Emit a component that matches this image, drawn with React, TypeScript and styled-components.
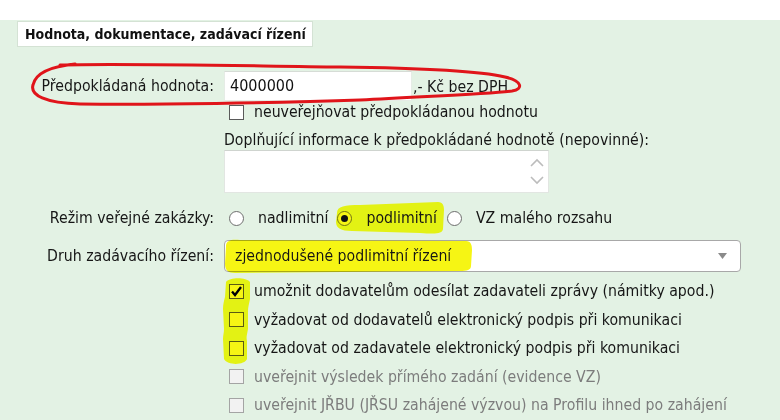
import React from "react";
import styled, { createGlobalStyle } from "styled-components";

const Global = createGlobalStyle`
  html, body { margin: 0; padding: 0; background: #ffffff; }
  body { font-family: "DejaVu Sans Condensed", "DejaVu Sans", sans-serif; color: #161616; }
`;

const Page = styled.div`
  width: 780px;
  height: 420px;
  overflow: hidden;
  padding-top: 20px;
  box-sizing: border-box;
`;

const Panel = styled.div`
  background: #e3f2e4;
  height: 400px;
  padding-top: 1px;
  box-sizing: border-box;
  font-size: 15.7px;
`;

const Heading = styled.div`
  margin-left: 17px;
  width: 296px;
  height: 26px;
  box-sizing: border-box;
  background: #ffffff;
  border: 1px solid #d4e2d4;
  padding-left: 7px;
  font-weight: bold;
  font-size: 14px;
  line-height: 24px;
  color: #111;
  white-space: nowrap;
`;

const Row = styled.div<{ $top: number; $h: number }>`
  position: relative;
  display: grid;
  grid-template-columns: 214px 1fr;
  column-gap: 10px;
  align-items: center;
  margin-top: ${(p) => p.$top}px;
  height: ${(p) => p.$h}px;
`;

const Label = styled.div`
  text-align: right;
  white-space: nowrap;
  line-height: 18px;
`;

const Cell = styled.div`
  display: flex;
  align-items: center;
  white-space: nowrap;
`;

const ValueInput = styled.div`
  width: 188px;
  height: 30px;
  box-sizing: border-box;
  background: #fff;
  border: 1px solid #e6ece6;
  border-top-color: #d6dcd6;
  padding-left: 5px;
  font-size: 16px;
  line-height: 28px;
  color: #111;
`;

const Suffix = styled.span`
  margin-left: 1px;
`;

const Box = styled.span<{ $disabled?: boolean }>`
  display: inline-flex;
  align-items: center;
  justify-content: center;
  width: 15px;
  height: 15px;
  box-sizing: border-box;
  border: 1px solid ${(p) => (p.$disabled ? "#a4a4a4" : "#5a5a5a")};
  background: ${(p) => (p.$disabled ? "#f2f2f2" : "#ffffff")};
  margin-left: 5px;
  margin-right: 10px;
  flex: none;
`;

const Radio = styled.span<{ $checked?: boolean }>`
  display: inline-flex;
  align-items: center;
  justify-content: center;
  width: 15px;
  height: 15px;
  box-sizing: border-box;
  border-radius: 50%;
  border: 1px solid #6e6e6e;
  background: #fff;
  flex: none;
  &::after {
    content: "";
    display: ${(p) => (p.$checked ? "block" : "none")};
    width: 7px;
    height: 7px;
    border-radius: 50%;
    background: #111;
  }
`;

const RadioOption = styled.label<{ $gap: number }>`
  display: inline-flex;
  align-items: center;
  margin-left: ${(p) => p.$gap}px;
  gap: 14px;
`;

const OptText = styled.span<{ $disabled?: boolean }>`
  color: ${(p) => (p.$disabled ? "#7c7c7c" : "#161616")};
  line-height: 18px;
  white-space: nowrap;
`;

const Help = styled.div`
  line-height: 18px;
  white-space: nowrap;
`;

const TextArea = styled.div`
  width: 325px;
  height: 43px;
  box-sizing: border-box;
  background: #fff;
  border: 1px solid #e2e6e2;
  border-top-color: #cfd4cf;
  display: flex;
  justify-content: flex-end;
`;

const ScrollArrows = styled.div`
  width: 20px;
  display: flex;
  flex-direction: column;
  justify-content: space-around;
  align-items: center;
  padding: 3px 0;
  margin-right: 1px;
`;

const Select = styled.div`
  width: 517px;
  height: 32px;
  box-sizing: border-box;
  background: #fff;
  border: 1px solid #a8a8a8;
  border-radius: 4px;
  display: flex;
  align-items: center;
  justify-content: space-between;
  padding: 0 13px 0 10px;
`;

const SelectText = styled.span`
  line-height: 18px;
`;

const Checks = styled.div`
  position: relative;
  margin-top: 5px;
`;

const CheckRow = styled.div`
  display: grid;
  grid-template-columns: 214px 1fr;
  column-gap: 10px;
  align-items: center;
  height: 28.5px;
`;

const Overlay = styled.svg<{ $left: number; $top: number }>`
  position: absolute;
  left: ${(p) => p.$left}px;
  top: ${(p) => p.$top}px;
  pointer-events: none;
  overflow: visible;
`;

const Marker = styled(Overlay)`
  mix-blend-mode: darken;
`;

const Check = () => (
  <svg width="13" height="13" viewBox="0 0 13 13">
    <path d="M2 6.5 L5 10 L11 2" fill="none" stroke="#000" strokeWidth="2.4" />
  </svg>
);

const Chevron = ({ up }: { up?: boolean }) => (
  <svg width="14" height="9" viewBox="0 0 14 9">
    <path d={up ? "M1 8 L7 2 L13 8" : "M1 1 L7 7 L13 1"} fill="none" stroke="#bcbcbc" strokeWidth="1.6" />
  </svg>
);

const YELLOW = "#f6f514";

type Opt = { text: string; checked?: boolean; disabled?: boolean };

const checks: Opt[] = [
  { text: "umožnit dodavatelům odesílat zadavateli zprávy (námitky apod.)", checked: true },
  { text: "vyžadovat od dodavatelů elektronický podpis při komunikaci" },
  { text: "vyžadovat od zadavatele elektronický podpis při komunikaci" },
  { text: "uveřejnit výsledek přímého zadání (evidence VZ)", disabled: true },
  { text: "uveřejnit JŘBU (JŘSU zahájené výzvou) na Profilu ihned po zahájení", disabled: true },
];

export default function App() {
  return (
    <Page>
      <Global />
      <Panel>
        <Heading>Hodnota, dokumentace, zadávací řízení</Heading>

        <Row $top={24} $h={30}>
          <Label>Předpokládaná hodnota:</Label>
          <Cell>
            <ValueInput>4000000</ValueInput>
            <Suffix>,- Kč bez DPH</Suffix>
          </Cell>
          <Overlay $left={0} $top={-12} width="540" height="60" viewBox="0 0 540 60">
            <path
              d="M 60 6 C 120 4, 250 7, 340 8 C 420 9, 480 12, 505 18 C 522 22, 524 30, 512 32 C 490 35, 430 37, 360 41 C 280 44, 150 46, 80 45 C 45 44, 30 36, 33 26 C 35 16, 45 8, 75 5"
              fill="none"
              stroke="#e0141a"
              strokeWidth="3"
              strokeLinecap="round"
            />
          </Overlay>
        </Row>

        <Row $top={2} $h={18}>
          <span />
          <Cell>
            <Box />
            <OptText>neuveřejňovat předpokládanou hodnotu</OptText>
          </Cell>
        </Row>

        <Row $top={10} $h={18}>
          <span />
          <Help>Doplňující informace k předpokládané hodnotě (nepovinné):</Help>
        </Row>

        <Row $top={1} $h={43}>
          <span />
          <TextArea>
            <ScrollArrows>
              <Chevron up />
              <Chevron />
            </ScrollArrows>
          </TextArea>
        </Row>

        <Row $top={11} $h={28}>
          <Label>Režim veřejné zakázky:</Label>
          <Cell>
            <RadioOption $gap={5}>
              <Radio />
              <OptText>nadlimitní</OptText>
            </RadioOption>
            <RadioOption $gap={9}>
              <Radio $checked />
              <OptText>podlimitní</OptText>
            </RadioOption>
            <RadioOption $gap={10}>
              <Radio />
              <OptText>VZ malého rozsahu</OptText>
            </RadioOption>
          </Cell>
          <Marker $left={0} $top={-204} width="780" height="420" viewBox="0 0 780 420">
            <path
              d="M 337 213 C 337 206, 345 205, 360 205 L 438 202 C 443 202, 444 206, 444 210 L 443 229 C 442 234, 436 234, 420 233 L 352 231 C 341 231, 336 228, 336 222 Z"
              fill={YELLOW}
            />
          </Marker>
        </Row>

        <Row $top={8} $h={32}>
          <Label>Druh zadávacího řízení:</Label>
          <Select>
            <SelectText>zjednodušené podlimitní řízení</SelectText>
            <svg width="9" height="6" viewBox="0 0 9 6">
              <path d="M0 0 L9 0 L4.5 6 Z" fill="#8a8a8a" />
            </svg>
          </Select>
          <Marker $left={0} $top={-240} width="780" height="420" viewBox="0 0 780 420">
            <path
              d="M 226 246 C 226 240, 232 239, 240 240 L 466 241 C 471 241, 472 245, 472 250 L 471 266 C 471 270, 467 271, 460 271 L 235 273 C 228 273, 225 270, 225 264 Z"
              fill={YELLOW}
            />
          </Marker>
        </Row>

        <Checks>
          {checks.map((c) => (
            <CheckRow key={c.text}>
              <span />
              <Cell>
                <Box $disabled={c.disabled}>{c.checked && <Check />}</Box>
                <OptText $disabled={c.disabled}>{c.text}</OptText>
              </Cell>
            </CheckRow>
          ))}
          <Marker $left={0} $top={-278} width="780" height="420" viewBox="0 0 780 420">
            <path
              d="M 226 283 C 230 278, 246 278, 250 283 L 250 300 C 249 305, 248 308, 248 312 L 248 330 C 247 336, 246 338, 247 342 L 247 360 C 245 366, 228 367, 224 360 L 223 340 C 223 336, 224 334, 224 330 L 223 310 C 223 305, 224 302, 225 298 Z"
              fill={YELLOW}
            />
          </Marker>
        </Checks>
      </Panel>
    </Page>
  );
}
